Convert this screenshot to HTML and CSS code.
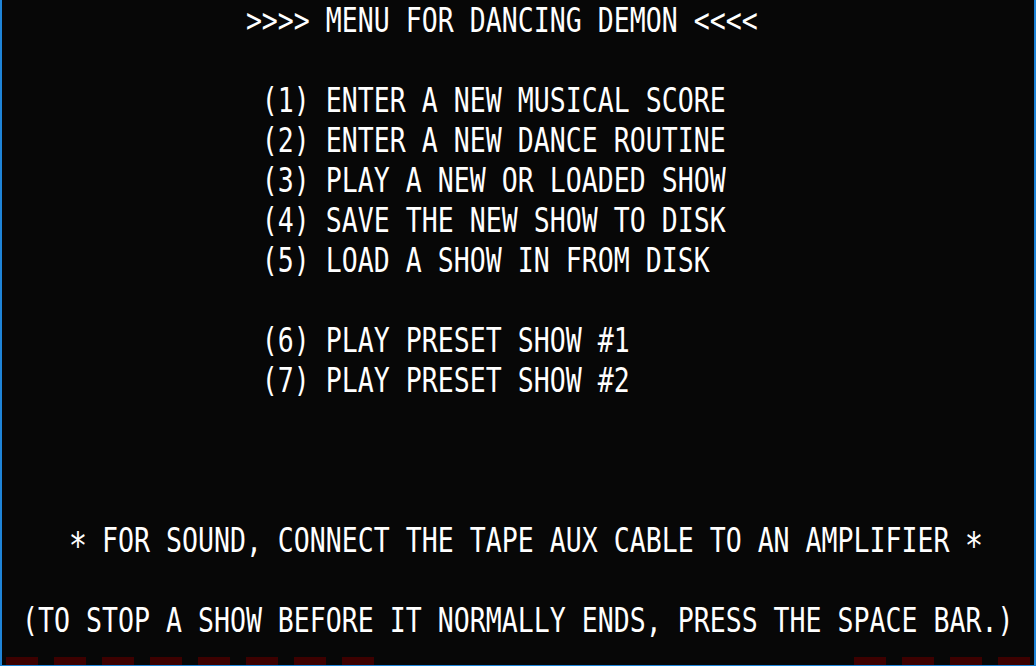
FILE: index.html
```html
<!DOCTYPE html>
<html lang="en">
<head>
<meta charset="utf-8">
<title>Menu for Dancing Demon</title>
<link rel="stylesheet" href="styles.css">
</head>
<body>
<div class="frame">
  <div class="screen">
    <div class="row"><span class="line">               &gt;&gt;&gt;&gt; MENU FOR DANCING DEMON &lt;&lt;&lt;&lt;</span></div>
    <div class="row"></div>
    <div class="row"><span class="line">                (1) ENTER A NEW MUSICAL SCORE</span></div>
    <div class="row"><span class="line">                (2) ENTER A NEW DANCE ROUTINE</span></div>
    <div class="row"><span class="line">                (3) PLAY A NEW OR LOADED SHOW</span></div>
    <div class="row"><span class="line">                (4) SAVE THE NEW SHOW TO DISK</span></div>
    <div class="row"><span class="line">                (5) LOAD A SHOW IN FROM DISK</span></div>
    <div class="row"></div>
    <div class="row"><span class="line">                (6) PLAY PRESET SHOW #1</span></div>
    <div class="row"><span class="line">                (7) PLAY PRESET SHOW #2</span></div>
    <div class="row"></div>
    <div class="row"></div>
    <div class="row"></div>
    <div class="row"><span class="line">    <span class="star">*</span> FOR SOUND, CONNECT THE TAPE AUX CABLE TO AN AMPLIFIER <span class="star">*</span></span></div>
    <div class="row"></div>
    <div class="row"><span class="line"> (TO STOP A SHOW BEFORE IT NORMALLY ENDS, PRESS THE SPACE BAR.)</span></div>
  </div>
  <div class="status">
    <div class="blocks">
      <span class="block"></span><span class="block"></span><span class="block"></span><span class="block"></span>
      <span class="block"></span><span class="block"></span><span class="block"></span><span class="block"></span>
    </div>
    <div class="blocks">
      <span class="block"></span><span class="block"></span><span class="block"></span><span class="block"></span>
    </div>
  </div>
</div>
</body>
</html>
```

FILE: styles.css
```css
html, body {
  margin: 0;
  padding: 0;
  background: #000;
}

.frame {
  width: 1036px;
  height: 666px;
  box-sizing: border-box;
  background: #070707;
  border-left: 2px solid #1f84d8;
  border-right: 2px solid #1f84d8;
  border-bottom: 1px solid #1f84d8;
  display: flex;
  flex-direction: column;
  overflow: hidden;
}

.screen {
  padding: 0 4px;
  height: 640px;
  display: flex;
  flex-direction: column;
}

.row {
  height: 40px;
  display: flex;
  align-items: center;
}

.line {
  display: inline-block;
  white-space: pre;
  font-family: "DejaVu Sans Mono", "Liberation Mono", monospace;
  font-size: 26.575px;
  line-height: 30px;
  color: #fff;
  transform: scaleY(1.29);
  transform-origin: 50% 48%;
}

.star {
  display: inline-block;
  width: 16px;
  text-align: center;
  transform: scale(1.15, 1.1) translateY(4px);
}

.status {
  margin-top: 17px;
  height: 8px;
  padding: 0 4px;
  display: flex;
  justify-content: space-between;
}

.blocks {
  display: flex;
  gap: 16px;
}

.block {
  width: 32px;
  height: 8px;
  background: #3d0000;
}
```
